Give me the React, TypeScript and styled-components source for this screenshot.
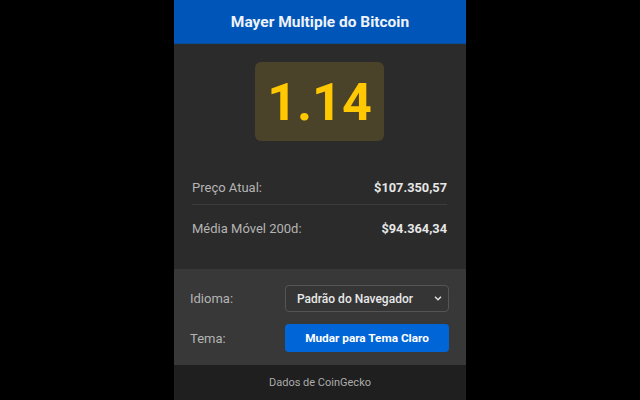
import React from "react";
import styled, { createGlobalStyle } from "styled-components";

const Global = createGlobalStyle`
  html, body { margin: 0; padding: 0; background: #000; }
  body { font-family: Roboto, "Liberation Sans", sans-serif; }
  * { box-sizing: border-box; }
`;

const Popup = styled.div`
  width: 292px;
  height: 400px;
  margin: 0 auto;
  display: flex;
  flex-direction: column;
  background: #2b2b2b;
`;

const Header = styled.header`
  height: 44px;
  background: #0055b8;
  border-bottom: 1px solid #0a4a96;
  display: flex;
  align-items: center;
  justify-content: center;
`;

const Title = styled.h1`
  margin: 0;
  font-size: 15.5px;
  font-weight: 700;
  color: #eef3fb;
`;

const Main = styled.main`
  flex: 1;
  padding: 18px 19px 0 18px;
  display: flex;
  flex-direction: column;
  align-items: stretch;
`;

const ValueBox = styled.div`
  align-self: center;
  width: 129px;
  height: 79px;
  border-radius: 6px;
  background: #4a4229;
  display: flex;
  align-items: center;
  justify-content: center;
  color: #ffc800;
  font-size: 52px;
  font-weight: 700;
  line-height: 1;
  padding-top: 2px;
`;

const Stats = styled.div`
  margin-top: 31px;
  display: flex;
  flex-direction: column;
  gap: 8px;
`;

const StatRow = styled.div<{ $divider?: boolean }>`
  display: flex;
  justify-content: space-between;
  align-items: center;
  padding: 8px 0;
  line-height: 16px;
  border-bottom: ${(p) => (p.$divider ? "1px solid #3c3c3c" : "none")};
`;

const StatLabel = styled.span`
  font-size: 13px;
  color: #b4b4b4;
`;

const StatValue = styled.span`
  font-size: 12.8px;
  font-weight: 700;
  color: #e6e6e6;
`;

const Settings = styled.section`
  height: 96px;
  background: #383838;
  padding: 16px 17px 0 16px;
  display: grid;
  grid-template-columns: 95px 1fr;
  grid-auto-rows: min-content;
  row-gap: 12px;
  align-items: center;
`;

const SettingLabel = styled.label`
  font-size: 13px;
  color: #b4b4b4;
`;

const SelectWrap = styled.div`
  position: relative;
`;

const Select = styled.select`
  width: 100%;
  height: 27px;
  appearance: none;
  background: #353535;
  border: 1px solid #555;
  border-radius: 4px;
  color: #e8e8e8;
  font-family: Roboto, "Liberation Sans", sans-serif;
  font-size: 12px;
  font-weight: 500;
  padding: 0 11px;
  outline: none;
`;

const Chevron = styled.svg`
  position: absolute;
  right: 7px;
  top: 11px;
  pointer-events: none;
`;

const Button = styled.button`
  width: 100%;
  height: 28px;
  border: none;
  border-radius: 4px;
  background: #0066d8;
  color: #fff;
  font-family: Roboto, "Liberation Sans", sans-serif;
  font-size: 11.8px;
  font-weight: 700;
  cursor: pointer;
`;

const Footer = styled.footer`
  height: 35px;
  background: #1f1f1f;
  display: flex;
  align-items: center;
  justify-content: center;
  font-size: 11px;
  color: #ababab;
`;

export default function App() {
  return (
    <>
      <Global />
      <Popup>
        <Header>
          <Title>Mayer Multiple do Bitcoin</Title>
        </Header>
        <Main>
          <ValueBox>1.14</ValueBox>
          <Stats>
            <StatRow $divider>
              <StatLabel>Preço Atual:</StatLabel>
              <StatValue>$107.350,57</StatValue>
            </StatRow>
            <StatRow>
              <StatLabel>Média Móvel 200d:</StatLabel>
              <StatValue>$94.364,34</StatValue>
            </StatRow>
          </Stats>
        </Main>
        <Settings>
          <SettingLabel>Idioma:</SettingLabel>
          <SelectWrap>
            <Select defaultValue="auto">
              <option value="auto">Padrão do Navegador</option>
              <option value="pt">Português</option>
              <option value="en">English</option>
            </Select>
            <Chevron width="8" height="5" viewBox="0 0 8 5">
              <path d="M1 0.8l3 3 3-3" fill="none" stroke="#e0e0e0" strokeWidth="1.5" />
            </Chevron>
          </SelectWrap>
          <SettingLabel>Tema:</SettingLabel>
          <Button>Mudar para Tema Claro</Button>
        </Settings>
        <Footer>Dados de CoinGecko</Footer>
      </Popup>
    </>
  );
}
